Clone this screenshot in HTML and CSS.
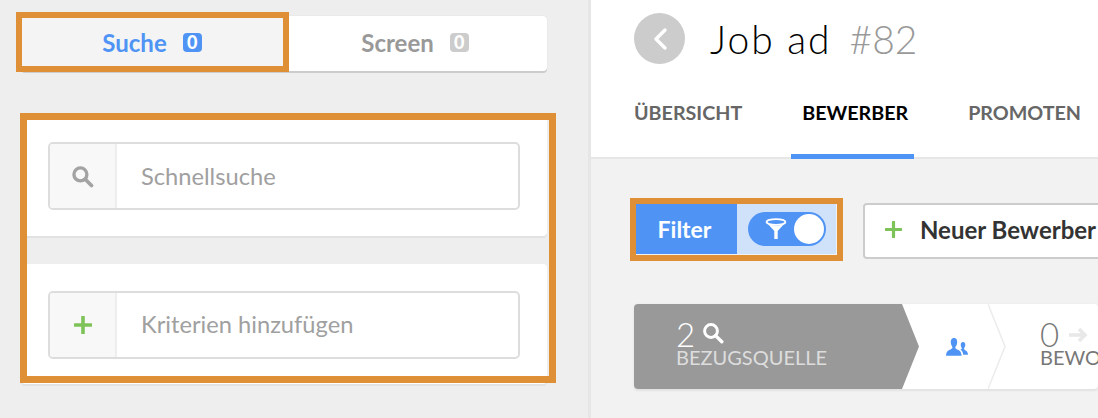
FILE: index.html
```html
<!DOCTYPE html>
<html>
<head>
    <title>Job ad #82</title>
    <link rel="stylesheet" href="styles.css">
</head>
<body>
    <div class="sidebar">
        <div class="mode-tabs">
            <div class="mode-tab active">
                Suche <span class="badge">0</span>
                <div class="mark mark-tab"></div>
            </div>
            <div class="mode-tab">
                Screen <span class="badge">0</span>
            </div>
        </div>

        <div class="search-cards">
            <div class="card">
                <div class="field">
                    <div class="field-icon">
                        <svg width="23" height="23" viewBox="0 0 22 22"><circle cx="9" cy="9" r="6.2" fill="none" stroke="#a3a3a3" stroke-width="3.2"/><path d="M13.6 13.6 L19.6 19.6" stroke="#a3a3a3" stroke-width="3.6" stroke-linecap="round"/></svg>
                    </div>
                    <div class="field-text">Schnellsuche</div>
                </div>
            </div>
            <div class="card">
                <div class="field">
                    <div class="field-icon">
                        <svg width="18" height="18" viewBox="0 0 18 18"><path d="M9 1 V17 M1 9 H17" stroke="#7dc35a" stroke-width="3.6" stroke-linecap="round"/></svg>
                    </div>
                    <div class="field-text">Kriterien hinzufügen</div>
                </div>
            </div>
            <div class="mark mark-cards"></div>
        </div>
    </div>

    <div class="main">
        <div class="header">
            <div class="title-row">
                <div class="back-button">
                    <svg width="16" height="24" viewBox="0 0 16 24"><path d="M13 3 L4 12 L13 21" fill="none" stroke="#fff" stroke-width="3.4" stroke-linecap="round" stroke-linejoin="round"/></svg>
                </div>
                <h1>Job ad</h1>
                <span class="job-id">#82</span>
            </div>
            <div class="nav">
                <div class="nav-item">ÜBERSICHT</div>
                <div class="nav-item selected">BEWERBER</div>
                <div class="nav-item">PROMOTEN</div>
            </div>
        </div>

        <div class="content">
            <div class="toolbar">
                <div class="filter">
                    <div class="filter-label">Filter</div>
                    <div class="filter-switch">
                        <div class="switch">
                            <svg width="22" height="22" viewBox="0 0 22 22"><ellipse cx="11" cy="4" rx="9.4" ry="2.9" fill="none" stroke="#fff" stroke-width="1.8"/><path d="M2 5 L9.3 13 V21 H12.7 V13 L20 5 C16 8.6 6 8.6 2 5 Z" fill="#fff"/></svg>
                            <div class="knob"></div>
                        </div>
                    </div>
                    <div class="mark mark-filter"></div>
                </div>
                <div class="new-button">
                    <svg width="17" height="17" viewBox="0 0 17 17"><path d="M8.5 1 V16 M1 8.5 H16" stroke="#7dc35a" stroke-width="3.2" stroke-linecap="round"/></svg>
                    <span>Neuer Bewerber</span>
                </div>
            </div>

            <div class="pipeline">
                <div class="step step-source">
                    <div class="step-count">2
                        <svg width="22" height="22" viewBox="0 0 22 22"><circle cx="9" cy="9" r="6.4" fill="none" stroke="#fff" stroke-width="3"/><path d="M13.6 13.6 L19.8 19.8" stroke="#fff" stroke-width="3.4" stroke-linecap="round"/></svg>
                    </div>
                    <div class="step-name">BEZUGSQUELLE</div>
                </div>
                <div class="step-people">
                    <svg width="22" height="20" viewBox="0 0 22 20"><path d="M8 1 C5.4 1 4.6 3.4 4.8 5.6 C5 7.6 5.6 9 6.4 10 C6.6 11.4 5.6 12 3.8 12.8 C1.8 13.6 0.4 14.6 0 18.8 H15.6 C15.2 14.6 13.8 13.6 11.8 12.8 C10 12 9 11.4 9.4 10 C10.4 9 11 7.6 11.2 5.6 C11.4 3.4 10.6 1 8 1 Z" fill="#4f94f5"/><path d="M17 5 C15.2 5 14.6 6.6 14.8 8.2 C15 9.6 15.4 10.4 15.8 11 C16 12 15.2 12.4 14.4 12.8 C16 13.8 17 15 17.2 17.8 H22 C21.8 14.8 20.8 14 19.6 13.4 C18.4 12.8 17.8 12.2 18.2 11 C18.8 10.4 19.2 9.4 19.3 8.2 C19.4 6.6 18.8 5 17 5 Z" fill="#4f94f5"/></svg>
                </div>
                <svg class="divider" width="18" height="85" viewBox="0 0 18 85"><path d="M0 0 L17 42.5 L0 85" fill="none" stroke="#ececec" stroke-width="1.5"/></svg>
                <div class="step step-applied">
                    <div class="step-count">0
                        <svg width="20" height="18" viewBox="0 0 20 18"><path d="M1 9 H17 M11 3 L17 9 L11 15" fill="none" stroke="#e8e8e8" stroke-width="3.6"/></svg>
                    </div>
                    <div class="step-name">BEWORBEN</div>
                </div>
            </div>
        </div>
    </div>
</body>
</html>
```

FILE: styles.css
```css
html,
body {
    height: 100%;
}

body {
    display: flex;
    margin: 0;
    overflow: hidden;
    font-family: Lato, "Open Sans", sans-serif;
    background-color: #eee;
}

.mark {
    position: absolute;
    box-sizing: border-box;
    border: 7px solid #df8f36;
}

.sidebar {
    flex: 0 0 591px;
    box-sizing: border-box;
    padding: 16px 41px 0 21px;
    border-right: 3px solid #e6e6e6;
}

.mode-tabs {
    display: flex;
    height: 55px;
    background-color: #fff;
    border-radius: 4px;
    box-shadow: 0 2px 0 #ccc, 0 0 1px #ccc;
}

.mode-tab {
    position: relative;
    display: flex;
    flex: 1;
    align-items: center;
    justify-content: center;
    gap: 16px;
    padding-bottom: 2px;
    box-sizing: border-box;
    font-size: 24px;
    font-weight: 700;
    color: #999;
}

.mode-tab.active {
    flex: 0 0 262px;
    color: #4f94f5;
    background-color: #f4f4f4;
}

.mode-tab .badge {
    width: 19px;
    height: 19px;
    font-size: 18px;
    font-weight: 900;
    line-height: 19px;
    text-align: center;
    color: #fff;
    background-color: #ccc;
    border-radius: 4px;
}

.mode-tab.active .badge {
    background-color: #4f94f5;
}

.mark-tab {
    top: -4px;
    right: -6px;
    bottom: -1px;
    left: -5px;
    border-width: 6px;
}

.search-cards {
    position: relative;
    margin-top: 45px;
}

.card {
    box-sizing: border-box;
    height: 120px;
    padding: 26px 27px 0;
    background-color: #fff;
    border-radius: 4px;
    box-shadow: 0 2px 0 #e2e2e2;
}

.card + .card {
    margin-top: 28px;
    padding-top: 27px;
}

.field {
    display: flex;
    height: 68px;
    box-sizing: border-box;
    border: 2px solid #ddd;
    border-radius: 5px;
}

.field-icon {
    display: flex;
    flex: 0 0 65px;
    align-items: center;
    justify-content: center;
    background-color: #f8f8f8;
    border-right: 2px solid #eee;
    border-radius: 3px 0 0 3px;
}

.field-text {
    padding-left: 24px;
    font-size: 23.7px;
    line-height: 65px;
    color: #a0a0a0;
}

.card + .card .field-text {
    line-height: 63px;
}

.mark-cards {
    top: -3px;
    right: -9px;
    bottom: 1px;
    left: -1px;
}

.main {
    flex: 1;
    min-width: 0;
    overflow: hidden;
    background-color: #f2f2f2;
}

.header {
    box-sizing: border-box;
    height: 159px;
    padding: 13px 0 0 43px;
    background-color: #fff;
    border-bottom: 2px solid #e6e6e6;
}

.title-row {
    display: flex;
    align-items: center;
    height: 51px;
}

.back-button {
    display: flex;
    flex: 0 0 51px;
    align-items: center;
    justify-content: center;
    height: 51px;
    background-color: #ccc;
    border-radius: 50%;
}

h1 {
    margin: 0 18px 0 25px;
    font-size: 39px;
    font-weight: 300;
    letter-spacing: 2px;
    color: #000;
}

.job-id {
    font-size: 39px;
    font-weight: 300;
    color: #999;
}

.nav {
    display: flex;
    gap: 60px;
    margin-top: 26px;
}

.nav-item {
    position: relative;
    height: 68px;
    font-size: 19.7px;
    font-weight: 700;
    line-height: 46px;
    color: #666;
}

.nav-item.selected {
    color: #000;
}

.nav-item.selected::after {
    content: "";
    position: absolute;
    right: -6px;
    bottom: -1px;
    left: -11px;
    height: 5px;
    background-color: #4f94f5;
}

.content {
    padding: 44px 0 0 43px;
}

.toolbar {
    display: flex;
    align-items: flex-start;
    gap: 27px;
}

.filter {
    position: relative;
    display: flex;
    flex: 0 0 200px;
    height: 50px;
    margin: 1px 0 0 2px;
}

.filter-label {
    flex: 0 0 101px;
    box-sizing: border-box;
    padding-right: 4px;
    font-size: 23px;
    font-weight: 700;
    line-height: 50px;
    text-align: center;
    color: #fff;
    background-color: #4f94f5;
}

.filter-switch {
    display: flex;
    flex: 1;
    align-items: center;
    justify-content: center;
    background-color: #d0e2fa;
}

.switch {
    display: flex;
    align-items: center;
    justify-content: space-between;
    box-sizing: border-box;
    width: 78px;
    height: 34px;
    padding: 0 2px 0 17px;
    background-color: #4f94f5;
    border-radius: 17px;
}

.knob {
    width: 30px;
    height: 30px;
    background-color: #fff;
    border-radius: 50%;
}

.mark-filter {
    top: -6px;
    right: -7px;
    bottom: -7px;
    left: -6px;
    border-width: 6px;
}

.new-button {
    display: flex;
    flex: 0 0 300px;
    align-items: center;
    gap: 18px;
    height: 56px;
    box-sizing: border-box;
    padding: 0 0 3px 20px;
    font-size: 24px;
    font-weight: 700;
    color: #333;
    background-color: #fff;
    border: 2px solid #ccc;
    border-radius: 4px;
}

.pipeline {
    display: flex;
    height: 85px;
    margin-top: 45px;
    background-color: #fff;
    border-radius: 4px;
    box-shadow: 0 2px 2px #e2e2e2, 0 0 2px #e8e8e8;
}

.step {
    box-sizing: border-box;
    flex: 0 0 auto;
}

.step-count {
    display: flex;
    align-items: flex-start;
    height: 30px;
    gap: 7px;
    font-size: 33px;
    font-weight: 300;
    line-height: 30px;
}

.step-count svg {
    margin-top: 3px;
}

.step-name {
    font-size: 20px;
    line-height: 16px;
}

.step-source {
    width: 285px;
    padding: 15px 0 0 42px;
    color: #fff;
    background-color: #999;
    border-radius: 4px 0 0 4px;
    clip-path: polygon(0 0, 268px 0, 285px 50%, 268px 100%, 0 100%);
}

.step-source .step-name {
    color: #ddd;
}

.step-people {
    display: flex;
    flex: 0 0 69px;
    align-items: center;
    justify-content: center;
    padding-left: 6px;
    box-sizing: border-box;
}

.divider {
    flex: 0 0 18px;
}

.step-applied {
    padding: 15px 0 0 34px;
    color: #777;
}

.step-applied svg {
    margin: 7px 0 0 2px;
}
```
